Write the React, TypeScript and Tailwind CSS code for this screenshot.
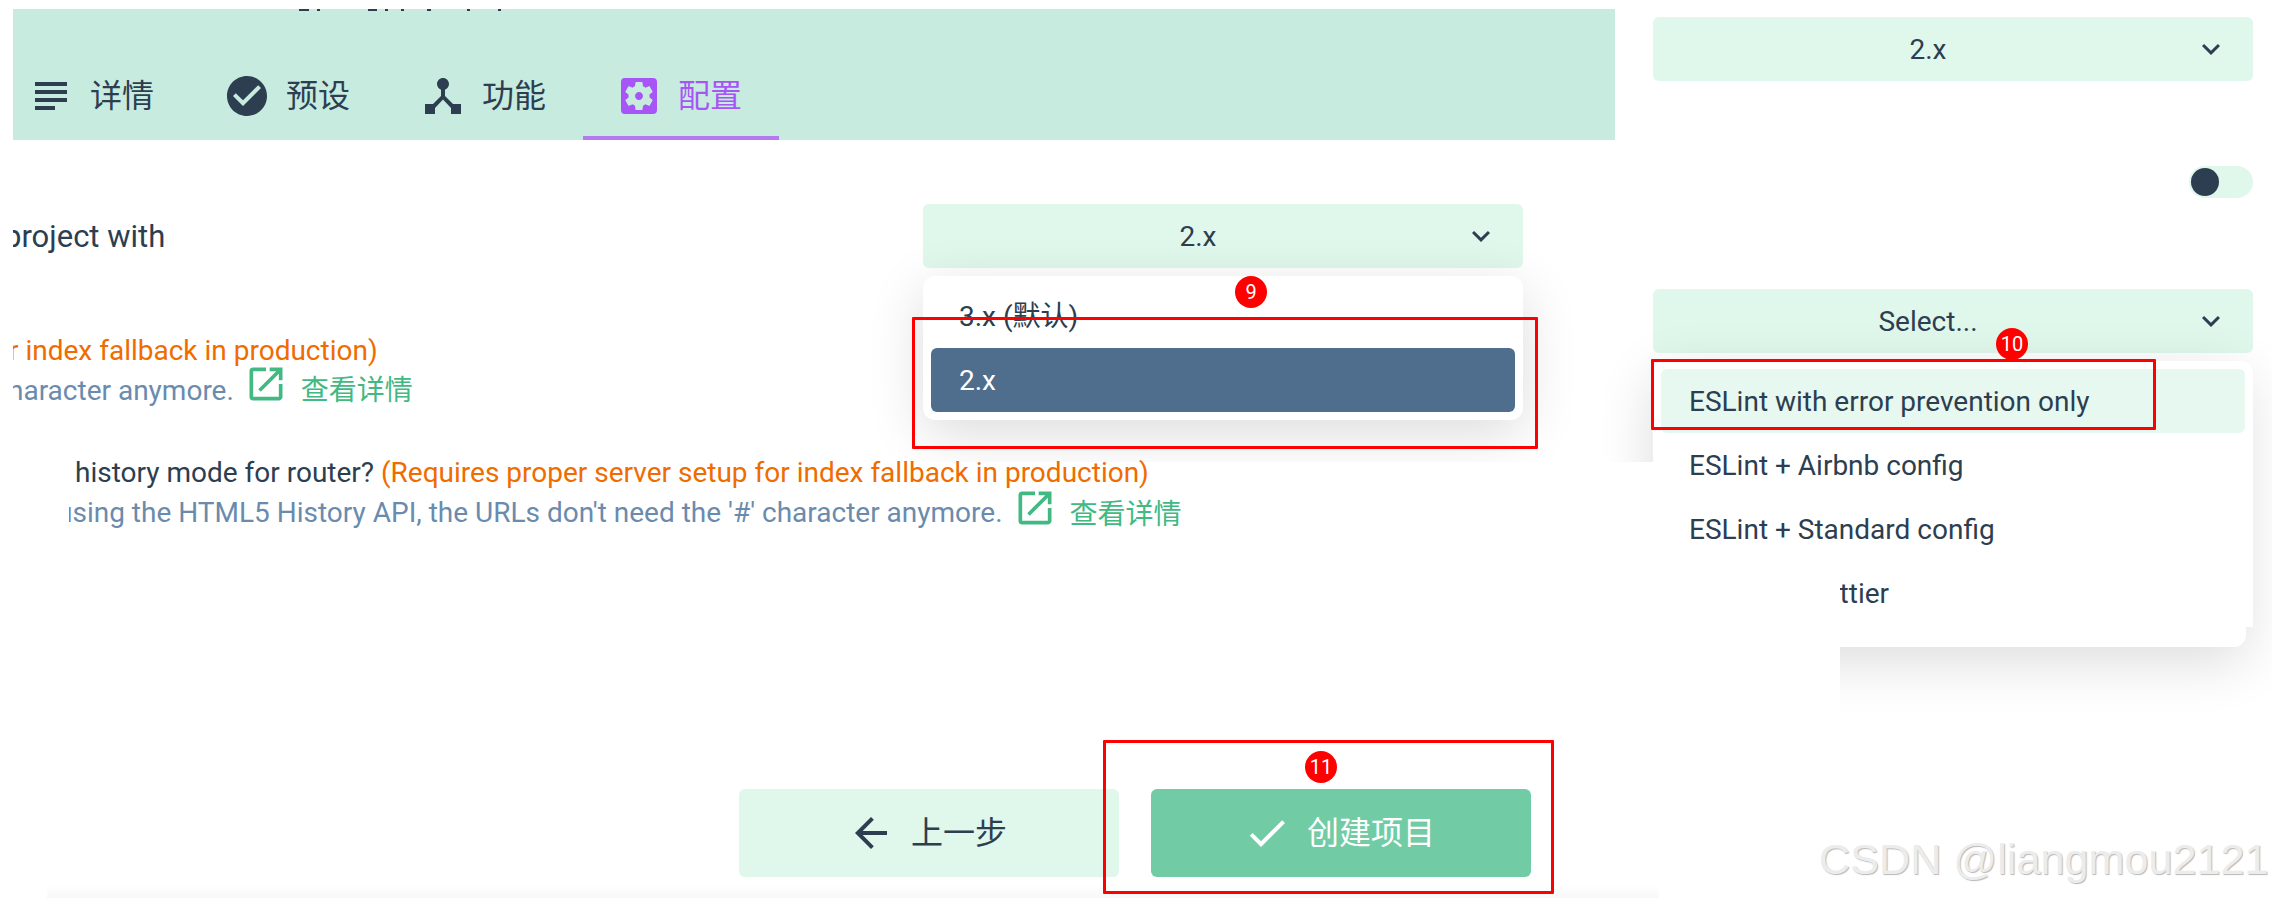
import React from "react";
import { MdSubject, MdCheckCircle, MdDeviceHub, MdSettingsApplications, MdOpenInNew, MdKeyboardArrowDown, MdArrowBack, MdCheck } from "react-icons/md";

function Tab({ icon, label, active }: { icon: React.ReactNode; label: string; active?: boolean }) {
  return (
    <div className={`flex h-[84px] w-[196px] shrink-0 items-center gap-[15px] border-b-4 pl-[32px] text-[32px] ${active ? "border-[#b57af0] text-[#a855f7]" : "border-transparent text-[#2c3e50]"}`}>
      {icon}
      <span>{label}</span>
    </div>
  );
}

function Select({ label }: { label: string }) {
  return (
    <div className="relative flex h-[64px] w-[600px] items-center justify-center rounded-[6px] bg-[#e0f7ec] pr-[50px] pt-[2px] text-[#2c3e50]">
      <span>{label}</span>
      <MdKeyboardArrowDown size={36} className="absolute right-[24px] top-[14px]" />
    </div>
  );
}

function Detail({ iconGap }: { iconGap: string }) {
  return (
    <span className="inline-flex items-center text-[#42b983]">
      <MdOpenInNew size={44} className={`-translate-y-[7px] ${iconGap}`} />
      <span className="ml-[13px]">查看详情</span>
    </span>
  );
}

function Badge({ n, className }: { n: string; className: string }) {
  return <div className={`absolute z-30 flex h-[32px] w-[32px] items-center justify-center rounded-full bg-[#ff0000] text-[20px] text-white ${className}`}>{n}</div>;
}

export default function App() {
  return (
    <div className="relative flex h-[898px] w-[2272px] overflow-hidden bg-white font-['Roboto','Noto_Sans_CJK_SC',sans-serif] text-[28px] text-[#2c3e50]">
      {/* left column */}
      <div className="relative ml-[13px] flex h-[898px] w-[1602px] shrink-0 flex-col pt-[9px]">
        <div className="relative flex h-[131px] shrink-0 items-end overflow-hidden bg-[#c7ebdf]">
          <svg className="absolute left-[286px] top-0" width="220" height="2" fill="#2c3e50">
            <rect x="0" width="10" height="2" />
            <rect x="18" width="3" height="2" />
            <rect x="69" width="9" height="2" />
            <rect x="86" width="3" height="2" />
            <rect x="102" width="3" height="2" />
            <rect x="128" width="4" height="2" />
            <rect x="168" width="3" height="2" />
            <rect x="199" width="3" height="2" />
          </svg>
          <div className="-ml-[18px] flex">
            <Tab label="详情" icon={<MdSubject size={48} className="shrink-0" />} />
            <Tab label="预设" icon={<MdCheckCircle size={48} className="shrink-0" />} />
            <Tab label="功能" icon={<MdDeviceHub size={48} className="shrink-0" />} />
            <Tab active label="配置" icon={<MdSettingsApplications size={48} className="shrink-0" />} />
          </div>
        </div>

        <div className="relative mt-[64px] flex h-[64px] shrink-0 items-center">
          <div className="w-[910px] shrink-0 overflow-hidden">
            <div className="-ml-[9px] pt-[2px] text-[31px]">project with</div>
          </div>
          <div className="relative">
            <Select label="2.x" />
            <div className="absolute left-0 top-[72px] z-10 h-[144px] w-[600px] rounded-[12px] bg-white p-[8px] shadow-[0_14px_56px_rgba(0,0,0,0.14)] [clip-path:inset(-100px_-100px_-42px_-100px)]">
              <div className="flex h-[64px] items-center pl-[28px] pt-[2px]">3.x (默认)</div>
              <div className="flex h-[64px] items-center rounded-[6px] bg-[#4f6d8c] pl-[28px] pt-[2px] text-white">2.x</div>
            </div>
          </div>
        </div>

        <div className="mt-[63px] w-[900px] shrink-0 overflow-hidden leading-[40px]">
          <div className="-ml-[4px] whitespace-nowrap text-[#ef6c00]">r index fallback in production)</div>
          <div className="-ml-[5px] flex h-[39px] whitespace-nowrap text-[#6a8bad]">
            <span>haracter anymore.</span>
            <Detail iconGap="ml-[10px]" />
          </div>
        </div>

        <div className="ml-[56px] mt-[43px] shrink-0 overflow-hidden leading-[40px]">
          <div className="ml-[6px] whitespace-nowrap">
            history mode for router? <span className="text-[#ef6c00]">(Requires proper server setup for index fallback in production)</span>
          </div>
          <div className="-ml-[12px] flex whitespace-nowrap text-[#6a8bad]">
            <span>using the HTML5 History API, the URLs don't need the '#' character anymore.</span>
            <Detail iconGap="ml-[10px]" />
          </div>
        </div>

        <div className="mb-[22px] ml-[726px] mt-auto flex gap-[32px] pt-[1px]">
          <div className="flex h-[88px] w-[380px] translate-y-[1px] items-center justify-center gap-[16px] rounded-[6px] bg-[#e0f7ec] pr-[4px]">
            <MdArrowBack size={48} />
            <span className="text-[32px]">上一步</span>
          </div>
          <div className="flex h-[88px] w-[380px] translate-y-[1px] items-center justify-center gap-[16px] rounded-[6px] bg-[#71cca5] pr-[4px] text-white">
            <MdCheck size={48} />
            <span className="text-[32px]">创建项目</span>
          </div>
        </div>
      </div>

      {/* right column */}
      <div className="relative ml-[38px] flex w-[600px] shrink-0 flex-col pt-[17px]">
        <Select label="2.x" />
        <div className="mt-[85px] flex h-[32px] w-[64px] items-center self-end rounded-full bg-[#e0f7ec] pl-[2px]">
          <div className="h-[28px] w-[28px] rounded-full bg-[#2c3e50]" />
        </div>
        <div className="mt-[91px]">
          <Select label="Select..." />
        </div>
        <div className="absolute left-0 top-[361px] z-10 h-[286px] w-[593px] rounded-[12px] bg-white shadow-[0_14px_56px_rgba(0,0,0,0.14)] [clip-path:polygon(-100px_-100px,700px_-100px,700px_400px,187px_400px,187px_209px,0px_209px,0px_101px,-100px_101px)]">
          <div className="absolute left-[573px] top-0 h-[266px] w-[27px] rounded-tr-[12px] bg-white" />
          <div className="relative flex flex-col py-[8px]">
            <div className="ml-[8px] flex h-[64px] w-[584px] items-center rounded-[6px] bg-[#e6f8ef] pl-[28px] pt-[2px]">ESLint with error prevention only</div>
            <div className="flex h-[64px] items-center pl-[36px] pt-[2px]">ESLint + Airbnb config</div>
            <div className="flex h-[64px] items-center pl-[36px] pt-[2px]">ESLint + Standard config</div>
            <div className="flex h-[64px] items-center pl-[36px] pt-[2px]">ESLint + Prettier</div>
          </div>
        </div>
      </div>

      {/* annotations of the screenshot */}
      <div className="absolute left-[912px] top-[317px] z-20 h-[132px] w-[626px] rounded-[1px] border-[3px] border-[#ff0000]" />
      <Badge n="9" className="left-[1235px] top-[276px]" />
      <div className="absolute left-[1651px] top-[359px] z-20 h-[71px] w-[505px] rounded-[1px] border-[3px] border-[#ff0000]" />
      <Badge n="10" className="left-[1996px] top-[328px]" />
      <div className="absolute left-[1103px] top-[740px] z-20 h-[154px] w-[451px] rounded-[1px] border-[3px] border-[#ff0000]" />
      <Badge n="11" className="left-[1305px] top-[751px]" />

      <div className="absolute bottom-0 left-[47px] h-[13px] w-[1612px] bg-linear-to-b from-white to-[#f8f8f8]" />

      <div className="absolute left-[1819px] top-[833px] z-20 whitespace-nowrap font-['Liberation_Sans',sans-serif] text-[43.2px] leading-[52px] text-[#ececec] [text-shadow:1px_1px_1px_#b8b8b8]">
        CSDN @liangmou2121
      </div>
    </div>
  );
}
